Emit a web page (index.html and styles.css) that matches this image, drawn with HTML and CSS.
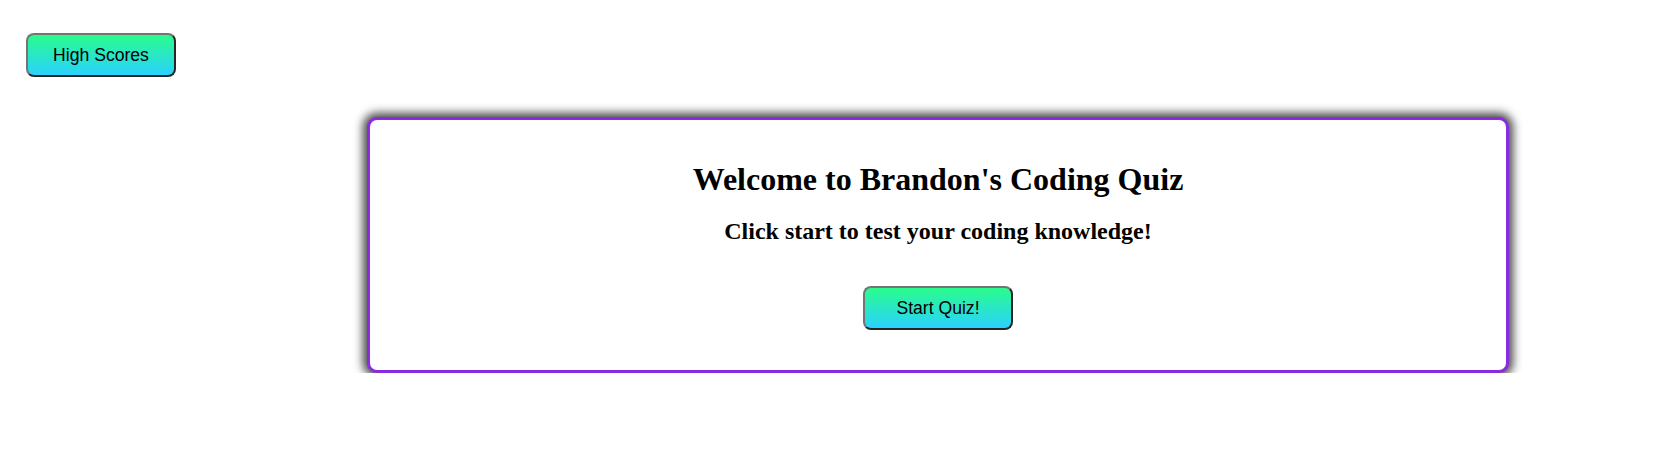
FILE: index.html
```html
<!DOCTYPE html>
<html lang="en">
<head>
<meta charset="utf-8">
<title>Brandon's Coding Quiz</title>
<link rel="stylesheet" href="styles.css">
</head>
<body>
  <header class="top-bar">
    <button class="btn">High Scores</button>
  </header>
  <main class="stage">
    <section class="card">
      <h1 class="card-title">Welcome to Brandon's Coding Quiz</h1>
      <h2 class="card-sub">Click start to test your coding knowledge!</h2>
      <button class="btn">Start Quiz!</button>
    </section>
  </main>
</body>
</html>
```

FILE: styles.css
```css
html, body {
  margin: 0;
  padding: 0;
  background: #ffffff;
}

body {
  font-family: "Liberation Serif", "Times New Roman", serif;
  color: #000;
}

.top-bar {
  display: flex;
  padding: 33px 0 0 26px;
}

.btn {
  box-sizing: border-box;
  width: 150px;
  height: 44px;
  font-family: "Liberation Sans", Arial, sans-serif;
  font-size: 17.6px;
  color: #000;
  background: linear-gradient(180deg, #2afc8c 0%, #29d2fe 100%);
  border: 2px solid;
  border-color: #747474 #262626 #262626 #747474;
  border-radius: 8px;
  padding: 0;
  cursor: pointer;
}

.stage {
  display: flex;
  padding: 40px 0 0 367px;
}

.card {
  box-sizing: border-box;
  width: 1142px;
  height: 256px;
  border: 3px solid #8a2be2;
  border-radius: 10px;
  box-shadow: 0 0 10px 4px rgba(0, 0, 0, 0.72);
  display: flex;
  flex-direction: column;
  align-items: center;
  text-align: center;
  background: #fff;
}

.card-title {
  font-size: 32px;
  font-weight: bold;
  margin: 41px 0 20px;
}

.card-sub {
  font-size: 24px;
  font-weight: bold;
  margin: 0 0 41px;
}
```
